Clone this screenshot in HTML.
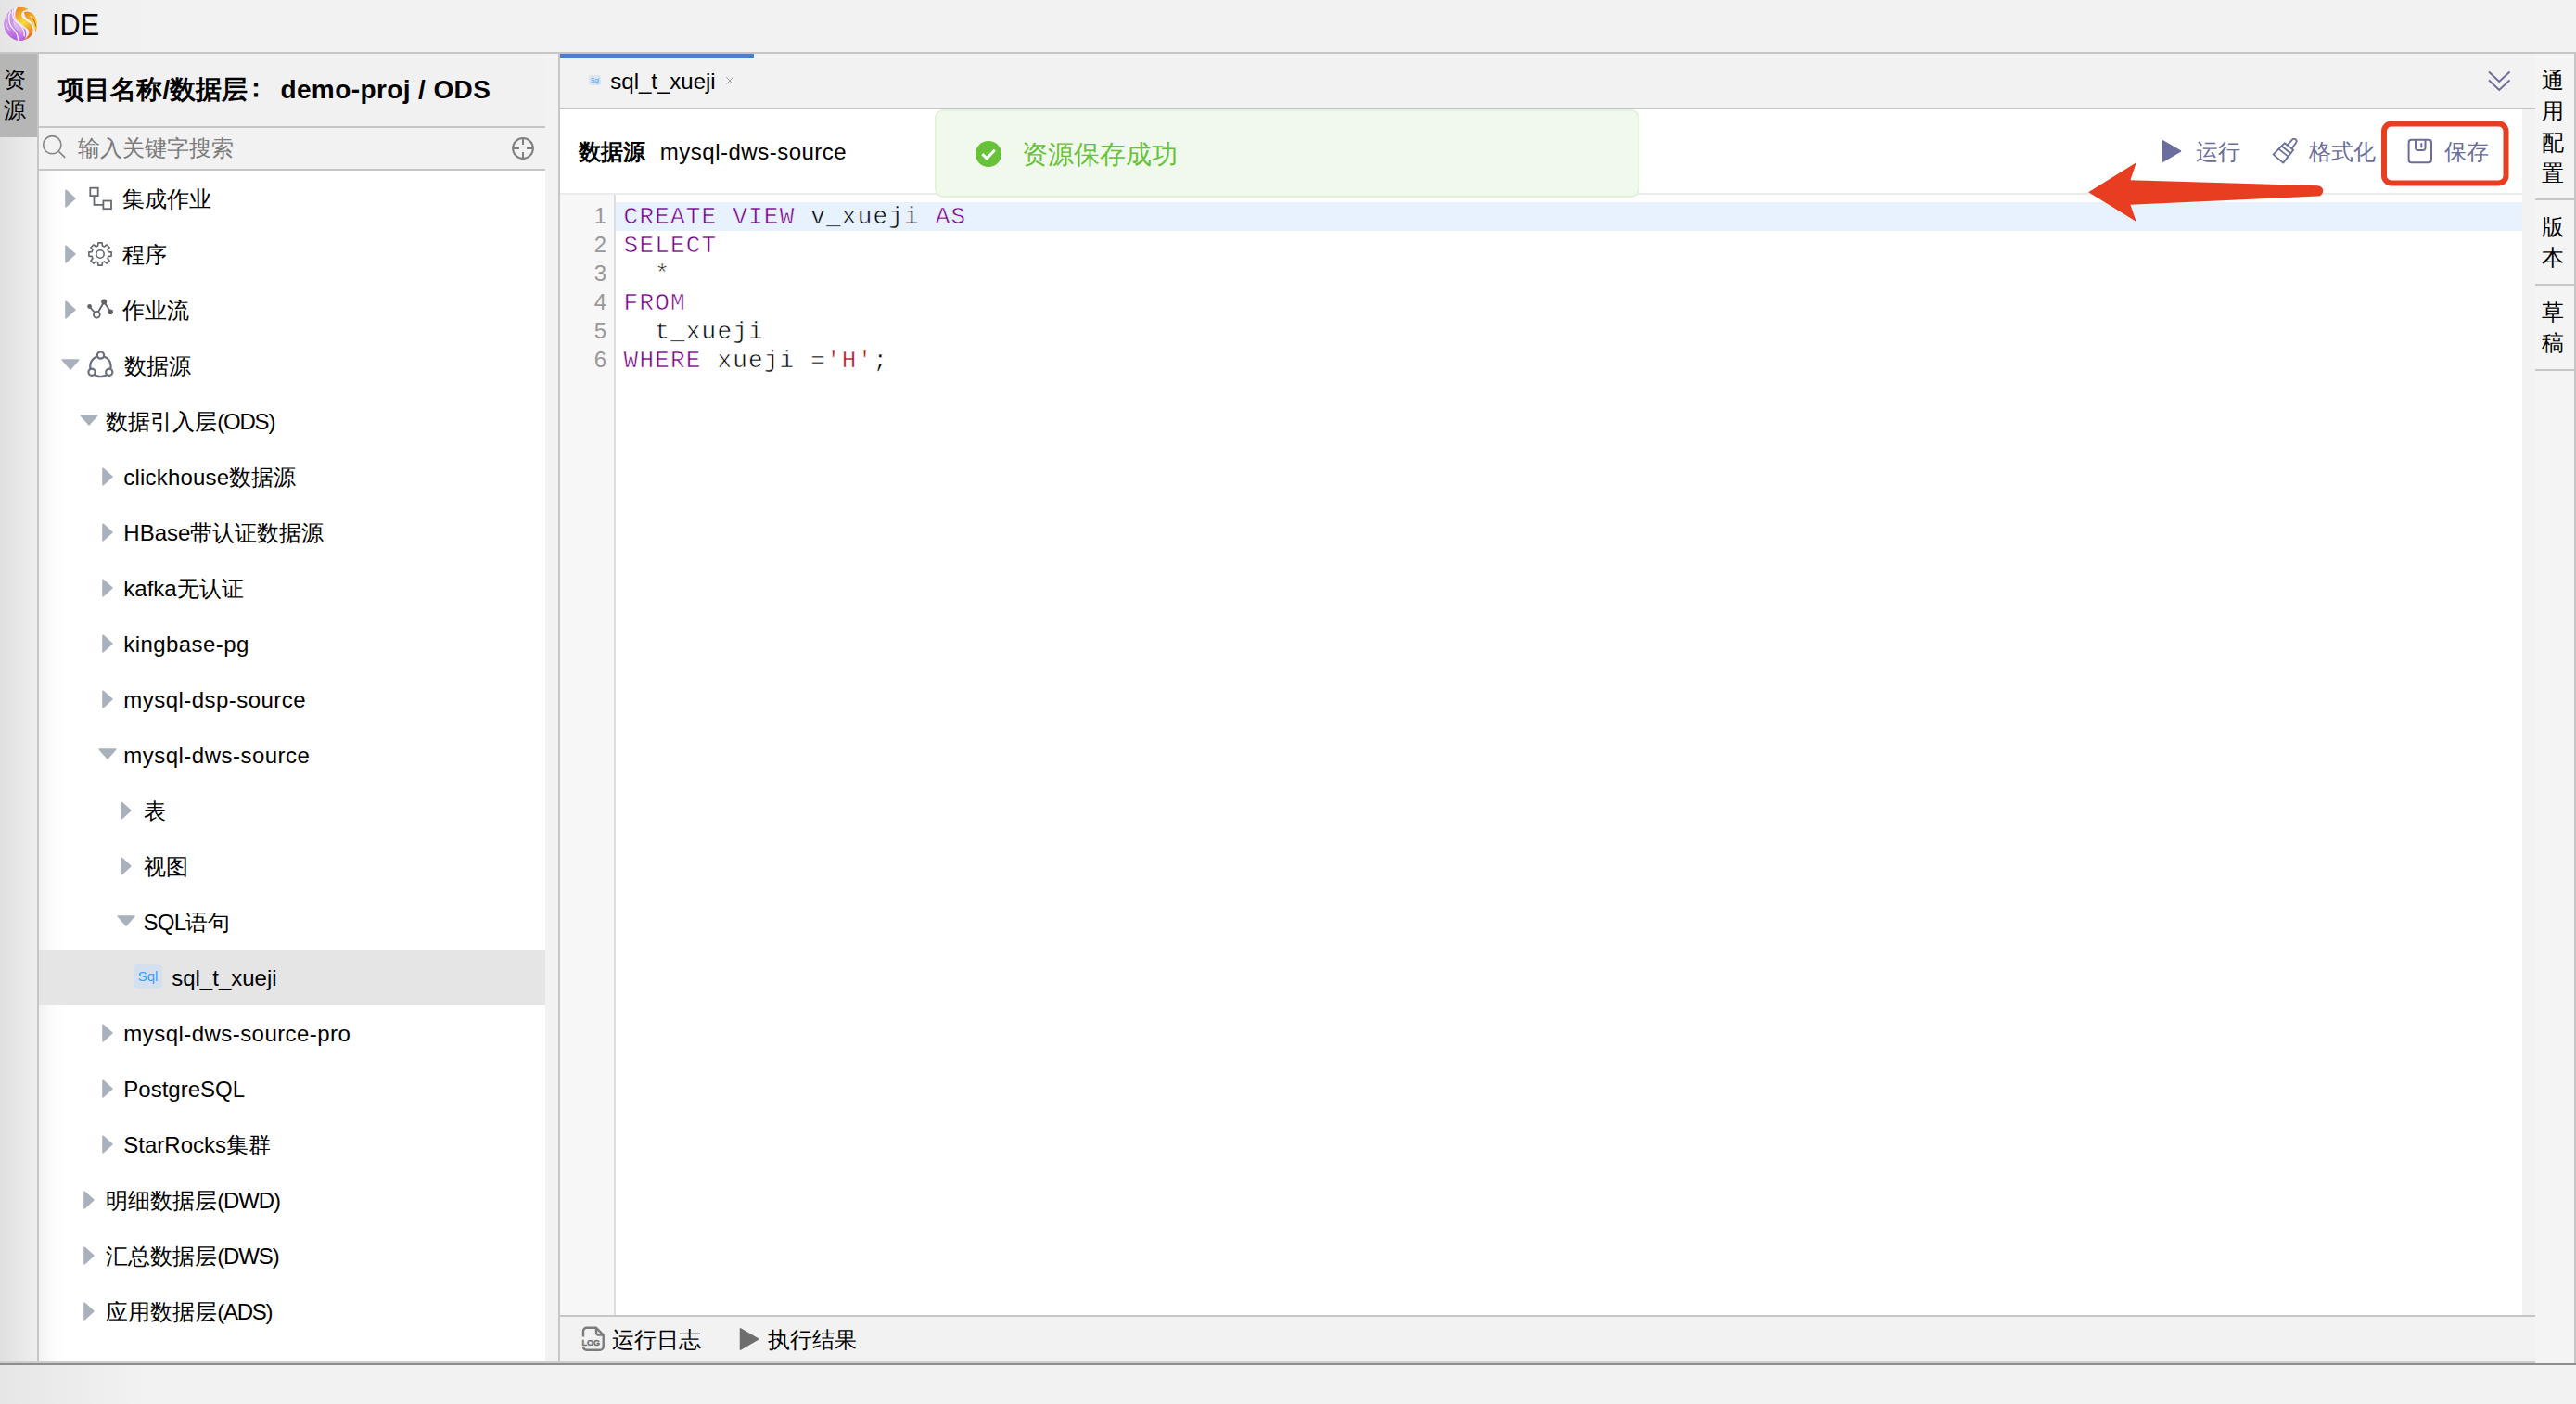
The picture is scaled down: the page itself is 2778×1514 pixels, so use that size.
<!DOCTYPE html>
<html lang="zh">
<head>
<meta charset="utf-8">
<title>IDE</title>
<style>
*{box-sizing:border-box;margin:0;padding:0}
html,body{width:2778px;height:1514px;overflow:hidden}
body{background:#f2f2f2;font-family:"Liberation Sans",sans-serif;color:#000;position:relative}
.abs{position:absolute}
#topbar{left:0;top:0;width:2778px;height:56px;background:linear-gradient(to right,#e4e4e4 0,#ececec 40px,#f1f1f1 110px,#f2f2f2 200px)}
#ide{left:55.500px;top:7.750px;font-size:33.500px;line-height:38px;transform:scaleX(0.915);transform-origin:0 0}
#hline{left:0;top:56px;width:2778px;height:2px;background:#c6c6c6}
#lstrip{left:0;top:58px;width:40px;height:1410px;background:linear-gradient(to right,#e0e0e0,#eeeeee)}
#restab{left:0;top:58px;width:40px;padding-right:8px;height:90px;background:#b6b6b6;font-size:24px;line-height:33px;text-align:center;padding-top:11px}
#lborder{left:40px;top:58px;width:2px;height:1410px;background:#c6c6c6}
#lpanel{left:42px;top:58px;width:546px;height:1410px;background:#f1f1f1}
#ptitle{left:21.400px;top:0;height:78px;line-height:78px;font-size:28px;font-weight:bold;white-space:nowrap}
#pt2{left:260.400px;top:0;height:78px;line-height:78px;font-size:28px;font-weight:bold;white-space:nowrap;letter-spacing:0.400px}
.hb{left:0;width:546px;height:2px;background:#c6c6c6}
#search{left:0;top:80px;width:546px;height:44px;background:#f2f2f2}
#ph{left:41.500px;top:-1px;height:44px;line-height:45px;font-size:24px;color:#7b7b7b;white-space:nowrap}
#tree{left:0;top:126px;width:546px;height:1284px;background:linear-gradient(to right,#f3f3f3 0,#fdfdfd 18px,#fff 30px)}
.row{position:absolute;left:0;width:546px;height:60px}
.row.sel{background:#e5e5e5}
.row .arr,.row .ticon{position:absolute}
.row .tx{position:absolute;top:0;height:60px;line-height:61px;font-size:24px;white-space:nowrap;color:#000}
.sqlic{position:absolute;width:31px;height:26px;border-radius:4px;background:#d5e0ef;color:#3b9cfb;font-size:15px;line-height:26px;text-align:center;letter-spacing:0}
#split{left:588px;top:58px;width:14px;height:1410px;background:#f2f2f2}
#vline{left:602px;top:58px;width:2px;height:1410px;background:#c6c6c6}
#tabbar{left:604px;top:58px;width:2130px;height:58px;background:#f2f2f2}
#tabind{left:0;top:0;width:209px;height:5px;background:#4c7fc4}
#tabtx{left:54.300px;top:3px;height:53px;line-height:53px;font-size:24px;white-space:nowrap}
#tabic{left:31px;top:23px;width:13px;height:11px;border-radius:2px;background:#dbe6f5;color:#3e9bf4;font-size:6.500px;line-height:11px;text-align:center;letter-spacing:-0.200px}
#tabline{left:604px;top:116px;width:2130px;height:2px;background:#c6c6c6}
#toolbar{left:604px;top:118px;width:2116px;height:90px;background:#fff}
#tbline{left:604px;top:208px;width:2116px;height:2px;background:#ebebeb}
#ds1{left:20px;top:0;height:90px;line-height:91px;font-size:24px;font-weight:bold;white-space:nowrap}
#ds2{left:107.800px;top:0;height:90px;line-height:91px;font-size:24px;letter-spacing:0.5px;white-space:nowrap}
.tb{position:absolute;top:0;height:90px;line-height:91px;font-size:24px;color:#6b6e9c;white-space:nowrap}
#editor{left:604px;top:210px;width:2116px;height:1208px;background:#fff;overflow:hidden}
#gutter{left:0;top:0;width:60px;height:1208px;background:#f7f7f7;border-right:2px solid #ddd}
.ln{position:absolute;right:8px;margin-top:-1px;height:31px;line-height:31px;font-size:24px;color:#999;text-align:right}
#active{left:60px;top:8px;width:2056px;height:31px;background:#e8f2ff}
.cl{position:absolute;left:68.600px;height:31px;line-height:31px;font-family:"Liberation Mono",monospace;font-size:26px;letter-spacing:1.200px;color:#000;white-space:pre;-webkit-text-stroke:0.550px #fff;margin-top:1.200px}
.cl.a{-webkit-text-stroke-color:#e8f2ff}
.k{color:#770088}.s{color:#aa1111}
#rstrip{left:2720px;top:118px;width:14px;height:1300px;background:#f2f2f2}
#botline{left:604px;top:1418px;width:2130px;height:2px;background:#c6c6c6}
#botbar{left:604px;top:1420px;width:2130px;height:48px;background:#f2f2f2}
.bt{position:absolute;top:0;height:48px;line-height:49px;font-size:24px;white-space:nowrap}
#bl1{left:0;top:1468px;width:2734px;height:2px;background:#cdcdcd}
#bl2{left:0;top:1470px;width:2778px;height:2px;background:#8e8e8e}
#rside{left:2734px;top:58px;width:42px;height:1412px;background:#f4f4f4}
#rborder{left:2776px;top:58px;width:2px;height:1412px;background:#c6c6c6}
.rs{position:absolute;left:-2px;width:42px;font-size:24px;line-height:33.400px;text-align:center;padding-top:12px}
.rl{position:absolute;left:0;width:42px;height:2px;background:#c6c6c6}
#toast{left:1008px;top:118px;width:760px;height:95px;border:2px solid #e1f3d8;border-radius:9px;background:#f0f9eb}
#toasttx{left:92px;top:0;height:91px;line-height:93px;font-size:28px;color:#67c23a;white-space:nowrap}
</style>
</head>
<body>
<div id="topbar" class="abs"></div>
<svg class="abs" style="left:3px;top:7px" width="38" height="38" viewBox="0 0 38 38">
<defs>
<clipPath id="lc"><circle cx="440" cy="512" r="362"/></clipPath>
<linearGradient id="lp" x1="0.3" y1="0" x2="0.5" y2="1"><stop offset="0" stop-color="#d3a3ea"/><stop offset="0.55" stop-color="#c98fe6"/><stop offset="1" stop-color="#b055d8"/></linearGradient>
<linearGradient id="lp2" x1="0" y1="0" x2="0.4" y2="1"><stop offset="0" stop-color="#e6d2f3"/><stop offset="0.6" stop-color="#d3a6ec"/><stop offset="1" stop-color="#bb68de"/></linearGradient>
<linearGradient id="lo" x1="0.2" y1="0" x2="0.6" y2="1"><stop offset="0" stop-color="#ea8522"/><stop offset="0.22" stop-color="#f2ab28"/><stop offset="0.5" stop-color="#f9de3c"/><stop offset="0.75" stop-color="#f0a226"/><stop offset="1" stop-color="#df681c"/></linearGradient>
<linearGradient id="lo2" x1="0" y1="0" x2="0.5" y2="1"><stop offset="0" stop-color="#ea8622"/><stop offset="0.5" stop-color="#f4b82c"/><stop offset="0.85" stop-color="#f9e442"/><stop offset="1" stop-color="#f2a828"/></linearGradient>
</defs>
<g transform="translate(-3,-7) scale(0.050467)" clip-path="url(#lc)">
<circle cx="440" cy="512" r="362" fill="#f1ecf5"/>
<path d="M300 160C200 200 100 330 80 500C75 650 180 800 330 865C400 885 470 875 520 855C565 780 575 700 545 640C500 570 400 520 340 440C290 370 280 260 300 160Z" fill="url(#lp)"/>
<path d="M290 430C330 520 440 560 505 640C550 700 530 800 480 870L390 880C440 800 440 720 375 655C310 595 270 540 290 430Z" fill="url(#lp2)"/>
<path d="M225 235C165 370 185 520 275 610C340 672 395 740 385 870" fill="none" stroke="#f1ecf5" stroke-width="26"/>
<path d="M150 330C110 450 130 560 200 650" fill="none" stroke="#efe4f6" stroke-width="18"/>
<path d="M275 205C250 330 290 430 380 500C470 565 545 640 520 780" fill="none" stroke="#f1ecf5" stroke-width="30"/>
<path d="M380 156C450 146 545 162 612 200C540 215 470 250 460 300C455 350 480 380 520 410C570 445 610 470 640 500C690 550 715 620 700 690C690 750 640 820 500 868C570 810 625 740 620 690C612 640 590 620 560 600C520 570 470 530 440 500C400 460 350 430 340 400C315 340 310 260 380 156Z" fill="url(#lo)"/>
<path d="M515 262C570 232 660 252 715 305C775 370 800 460 797 550C794 630 775 700 745 740C765 680 755 640 730 600C720 560 715 530 700 500C670 450 620 430 580 400C545 370 520 320 515 262Z" fill="url(#lo2)"/>
<path d="M640 340C700 385 735 440 748 520" fill="none" stroke="#f4ece4" stroke-width="20" opacity="0.9"/>
<path d="M685 385C735 430 758 490 764 570" fill="none" stroke="#df621c" stroke-width="24"/>
</g>
</svg>
<div id="ide" class="abs">IDE</div>
<div id="hline" class="abs"></div>

<div id="lstrip" class="abs"></div>
<div id="restab" class="abs">资<br>源</div>
<div id="lborder" class="abs"></div>

<div id="lpanel" class="abs">
  <div id="ptitle" class="abs">项目名称/数据层<span style="position:relative;left:-5.600px;top:-2.500px">：</span></div>
  <div id="pt2" class="abs">demo-proj / ODS</div>
  <div class="hb abs" style="top:78px"></div>
  <div id="search" class="abs">
    <svg class="abs" style="left:2px;top:6px" width="32" height="34" viewBox="0 0 32 34" fill="none" stroke="#858585" stroke-width="1.6"><circle cx="12.3" cy="12.2" r="9.6"/><path d="M19.2 19.2L26.2 25.8"/></svg>
    <div id="ph" class="abs">输入关键字搜索</div>
    <svg class="abs" style="left:508px;top:7.500px" width="28" height="28" viewBox="-14 -14 28 28" fill="none" stroke="#808080" stroke-width="2"><circle r="10.900"/><path d="M0 -10.900V-4M0 10.900V4M-10.900 0H-4M10.900 0H4"/></svg>
  </div>
  <div class="hb abs" style="top:124px"></div>
  <div id="tree" class="abs">
<div class="row" style="top:0px"><svg class="arr" style="left:28px;top:20px" width="12" height="20" viewBox="0 0 12 20"><path d="M1 1.2L11 10L1 18.8Z" fill="#a9b1bc" stroke="#a9b1bc" stroke-width="1.6" stroke-linejoin="round"/></svg><svg class="ticon" style="left:53px;top:16px" width="28" height="28" viewBox="0 0 28 28" fill="none" stroke="#666a70" stroke-width="1.8"><rect x="2.3" y="2.7" width="8.4" height="8.4"/><rect x="16.4" y="16.5" width="8.6" height="8.7"/><path d="M6.5 11.1V20.8H16.4"/></svg><span class="tx" style="left:90.0px">集成作业</span></div>
<div class="row" style="top:60px"><svg class="arr" style="left:28px;top:20px" width="12" height="20" viewBox="0 0 12 20"><path d="M1 1.2L11 10L1 18.8Z" fill="#a9b1bc" stroke="#a9b1bc" stroke-width="1.6" stroke-linejoin="round"/></svg><svg class="ticon" style="left:52px;top:16px" width="28" height="28" viewBox="-14 -14 28 28" fill="none" stroke="#63676d" stroke-width="1.6" stroke-linejoin="round"><circle r="4.2"/><path d="M8.99 -2.39 L12.12 -2.08 L12.12 2.08 L8.99 2.39 L8.05 4.66 L10.04 7.10 L7.10 10.04 L4.66 8.05 L2.39 8.99 L2.08 12.12 L-2.08 12.12 L-2.39 8.99 L-4.66 8.05 L-7.10 10.04 L-10.04 7.10 L-8.05 4.66 L-8.99 2.39 L-12.12 2.08 L-12.12 -2.08 L-8.99 -2.39 L-8.05 -4.66 L-10.04 -7.10 L-7.10 -10.04 L-4.66 -8.05 L-2.39 -8.99 L-2.08 -12.12 L2.08 -12.12 L2.39 -8.99 L4.66 -8.05 L7.10 -10.04 L10.04 -7.10 L8.05 -4.66Z"/></svg><span class="tx" style="left:90.0px">程序</span></div>
<div class="row" style="top:120px"><svg class="arr" style="left:28px;top:20px" width="12" height="20" viewBox="0 0 12 20"><path d="M1 1.2L11 10L1 18.8Z" fill="#a9b1bc" stroke="#a9b1bc" stroke-width="1.6" stroke-linejoin="round"/></svg><svg class="ticon" style="left:52px;top:12px" width="30" height="28" viewBox="0 0 30 28" fill="none" stroke="#5f6368" stroke-width="1.8"><path d="M2.3 14.5L10.3 23.3L18.2 9.5L25.2 20.2"/><circle cx="2.6" cy="14.5" r="2.4" fill="#5f6368" stroke="none"/><circle cx="18.2" cy="9.5" r="3" fill="#5f6368" stroke="none"/><circle cx="25.2" cy="20.2" r="2.8" fill="#5f6368" stroke="none"/><circle cx="10.3" cy="23.3" r="3.4" fill="#fff"/></svg><span class="tx" style="left:90.0px">作业流</span></div>
<div class="row" style="top:180px"><svg class="arr" style="left:24px;top:23px" width="20" height="12" viewBox="0 0 20 12"><path d="M1.2 1L18.8 1L10 11Z" fill="#a9b1bc" stroke="#a9b1bc" stroke-width="1.6" stroke-linejoin="round"/></svg><svg class="ticon" style="left:52px;top:14px" width="30" height="30" viewBox="0 0 30 30" fill="none" stroke="#6b6f7b" stroke-width="2.2"><circle cx="14.4" cy="17" r="11.2"/><circle cx="14.5" cy="5.1" r="3.6" fill="#fff"/><circle cx="5" cy="23.25" r="3.6" fill="#fff"/><circle cx="23.75" cy="23.25" r="3.6" fill="#fff"/></svg><span class="tx" style="left:92.0px">数据源</span></div>
<div class="row" style="top:240px"><svg class="arr" style="left:44px;top:23px" width="20" height="12" viewBox="0 0 20 12"><path d="M1.2 1L18.8 1L10 11Z" fill="#a9b1bc" stroke="#a9b1bc" stroke-width="1.6" stroke-linejoin="round"/></svg><span class="tx" style="left:72.2px">数据引入层<span style="letter-spacing:-1.2px">(ODS)</span></span></div>
<div class="row" style="top:300px"><svg class="arr" style="left:68px;top:20px" width="12" height="20" viewBox="0 0 12 20"><path d="M1 1.2L11 10L1 18.8Z" fill="#a9b1bc" stroke="#a9b1bc" stroke-width="1.6" stroke-linejoin="round"/></svg><span class="tx" style="left:91.3px"><span style="letter-spacing:0.2px">clickhouse</span>数据源</span></div>
<div class="row" style="top:360px"><svg class="arr" style="left:68px;top:20px" width="12" height="20" viewBox="0 0 12 20"><path d="M1 1.2L11 10L1 18.8Z" fill="#a9b1bc" stroke="#a9b1bc" stroke-width="1.6" stroke-linejoin="round"/></svg><span class="tx" style="left:91.3px">HBase带认证数据源</span></div>
<div class="row" style="top:420px"><svg class="arr" style="left:68px;top:20px" width="12" height="20" viewBox="0 0 12 20"><path d="M1 1.2L11 10L1 18.8Z" fill="#a9b1bc" stroke="#a9b1bc" stroke-width="1.6" stroke-linejoin="round"/></svg><span class="tx" style="left:91.3px">kafka无认证</span></div>
<div class="row" style="top:480px"><svg class="arr" style="left:68px;top:20px" width="12" height="20" viewBox="0 0 12 20"><path d="M1 1.2L11 10L1 18.8Z" fill="#a9b1bc" stroke="#a9b1bc" stroke-width="1.6" stroke-linejoin="round"/></svg><span class="tx" style="left:91.3px"><span style="letter-spacing:0.42px">kingbase-pg</span></span></div>
<div class="row" style="top:540px"><svg class="arr" style="left:68px;top:20px" width="12" height="20" viewBox="0 0 12 20"><path d="M1 1.2L11 10L1 18.8Z" fill="#a9b1bc" stroke="#a9b1bc" stroke-width="1.6" stroke-linejoin="round"/></svg><span class="tx" style="left:91.3px"><span style="letter-spacing:0.46px">mysql-dsp-source</span></span></div>
<div class="row" style="top:600px"><svg class="arr" style="left:64px;top:23px" width="20" height="12" viewBox="0 0 20 12"><path d="M1.2 1L18.8 1L10 11Z" fill="#a9b1bc" stroke="#a9b1bc" stroke-width="1.6" stroke-linejoin="round"/></svg><span class="tx" style="left:91.3px"><span style="letter-spacing:0.48px">mysql-dws-source</span></span></div>
<div class="row" style="top:660px"><svg class="arr" style="left:88px;top:20px" width="12" height="20" viewBox="0 0 12 20"><path d="M1 1.2L11 10L1 18.8Z" fill="#a9b1bc" stroke="#a9b1bc" stroke-width="1.6" stroke-linejoin="round"/></svg><span class="tx" style="left:112.5px">表</span></div>
<div class="row" style="top:720px"><svg class="arr" style="left:88px;top:20px" width="12" height="20" viewBox="0 0 12 20"><path d="M1 1.2L11 10L1 18.8Z" fill="#a9b1bc" stroke="#a9b1bc" stroke-width="1.6" stroke-linejoin="round"/></svg><span class="tx" style="left:112.5px">视图</span></div>
<div class="row" style="top:780px"><svg class="arr" style="left:84px;top:23px" width="20" height="12" viewBox="0 0 20 12"><path d="M1.2 1L18.8 1L10 11Z" fill="#a9b1bc" stroke="#a9b1bc" stroke-width="1.6" stroke-linejoin="round"/></svg><span class="tx" style="left:112.5px"><span style="letter-spacing:-0.7px">SQL</span>语句</span></div>
<div class="row sel" style="top:840px"><span class="sqlic" style="left:102px;top:16px">Sql</span><span class="tx" style="left:143.2px">sql_t_xueji</span></div>
<div class="row" style="top:900px"><svg class="arr" style="left:68px;top:20px" width="12" height="20" viewBox="0 0 12 20"><path d="M1 1.2L11 10L1 18.8Z" fill="#a9b1bc" stroke="#a9b1bc" stroke-width="1.6" stroke-linejoin="round"/></svg><span class="tx" style="left:91.3px"><span style="letter-spacing:0.45px">mysql-dws-source-pro</span></span></div>
<div class="row" style="top:960px"><svg class="arr" style="left:68px;top:20px" width="12" height="20" viewBox="0 0 12 20"><path d="M1 1.2L11 10L1 18.8Z" fill="#a9b1bc" stroke="#a9b1bc" stroke-width="1.6" stroke-linejoin="round"/></svg><span class="tx" style="left:91.3px">PostgreSQL</span></div>
<div class="row" style="top:1020px"><svg class="arr" style="left:68px;top:20px" width="12" height="20" viewBox="0 0 12 20"><path d="M1 1.2L11 10L1 18.8Z" fill="#a9b1bc" stroke="#a9b1bc" stroke-width="1.6" stroke-linejoin="round"/></svg><span class="tx" style="left:91.3px">StarRocks集群</span></div>
<div class="row" style="top:1080px"><svg class="arr" style="left:48px;top:20px" width="12" height="20" viewBox="0 0 12 20"><path d="M1 1.2L11 10L1 18.8Z" fill="#a9b1bc" stroke="#a9b1bc" stroke-width="1.6" stroke-linejoin="round"/></svg><span class="tx" style="left:72.2px">明细数据层<span style="letter-spacing:-1.1px">(DWD)</span></span></div>
<div class="row" style="top:1140px"><svg class="arr" style="left:48px;top:20px" width="12" height="20" viewBox="0 0 12 20"><path d="M1 1.2L11 10L1 18.8Z" fill="#a9b1bc" stroke="#a9b1bc" stroke-width="1.6" stroke-linejoin="round"/></svg><span class="tx" style="left:72.2px">汇总数据层<span style="letter-spacing:-1.1px">(DWS)</span></span></div>
<div class="row" style="top:1200px"><svg class="arr" style="left:48px;top:20px" width="12" height="20" viewBox="0 0 12 20"><path d="M1 1.2L11 10L1 18.8Z" fill="#a9b1bc" stroke="#a9b1bc" stroke-width="1.6" stroke-linejoin="round"/></svg><span class="tx" style="left:72.2px">应用数据层<span style="letter-spacing:-1.25px">(ADS)</span></span></div>
  </div>
</div>
<div id="split" class="abs"></div>
<div id="vline" class="abs"></div>

<div id="tabbar" class="abs">
  <div id="tabind" class="abs"></div>
  <div id="tabic" class="abs">Sql</div>
  <div id="tabtx" class="abs">sql_t_xueji</div>
  <svg class="abs" style="left:178px;top:24px" width="10" height="10" viewBox="0 0 10 10" stroke="#a2a2a2" stroke-width="1"><path d="M1.200 1.200L8.800 8.800M8.800 1.200L1.200 8.800"/></svg>
  <svg class="abs" style="left:2078px;top:17px" width="26" height="26" viewBox="0 0 26 26" fill="none" stroke="#6b6e9c" stroke-width="2"><path d="M2 2.5L13.2 13L24.5 2.5M2 11.5L13.2 22L24.5 11.5"/></svg>
</div>
<div id="tabline" class="abs"></div>

<div id="toolbar" class="abs">
  <div id="ds1" class="abs">数据源</div>
  <div id="ds2" class="abs">mysql-dws-source</div>
  <svg class="abs" style="left:1727px;top:32px" width="22" height="26" viewBox="0 0 22 26"><path d="M1.5 1.8L20.5 13L1.5 24.2Z" fill="#6b6e9c" stroke="#6b6e9c" stroke-width="1.5" stroke-linejoin="round"/></svg>
  <div class="tb" style="left:1764px">运行</div>
  <svg class="abs" style="left:1846px;top:31px" width="28" height="28" viewBox="0 0 28 28" fill="none" stroke="#6b6e9c" stroke-width="1.8" stroke-linejoin="round" stroke-linecap="round"><path d="M16.6 7.6L21.8 1.8A2.6 2.6 0 0 1 26 5L21.4 11.4"/><path d="M13.8 5.2L23.2 12.6L12.2 26.6L1.6 17.6Z"/><path d="M10.5 8.5L20.3 16.2M7.4 11.6L17.4 19.6"/></svg>
  <div class="tb" style="left:1886px">格式化</div>
  <svg class="abs" style="left:1992px;top:31px" width="28" height="28" viewBox="0 0 28 28" fill="none" stroke="#6b6e9c" stroke-width="2" stroke-linejoin="round" stroke-linecap="round"><rect x="1.6" y="1.8" width="24.4" height="24.4" rx="3"/><path d="M9 2V10.5A2.5 2.5 0 0 0 11.5 13H17A2.5 2.5 0 0 0 19.5 10.5V2"/><path d="M15.3 6V9.6"/></svg>
  <div class="tb" style="left:2032px">保存</div>
</div>
<div id="tbline" class="abs"></div>

<div id="editor" class="abs">
  <div id="gutter" class="abs"><div class="ln" style="top:8px">1</div><div class="ln" style="top:39px">2</div><div class="ln" style="top:70px">3</div><div class="ln" style="top:101px">4</div><div class="ln" style="top:132px">5</div><div class="ln" style="top:163px">6</div></div>
  <div id="active" class="abs"></div>
  <pre class="cl a" style="top:8px"><span class="k">CREATE</span> <span class="k">VIEW</span> v_xueji <span class="k">AS</span></pre><pre class="cl" style="top:39px"><span class="k">SELECT</span></pre><pre class="cl" style="top:70px">  *</pre><pre class="cl" style="top:101px"><span class="k">FROM</span></pre><pre class="cl" style="top:132px">  t_xueji</pre><pre class="cl" style="top:163px"><span class="k">WHERE</span> xueji =<span class="s">'H'</span>;</pre>
</div>
<div id="rstrip" class="abs"></div>
<div id="botline" class="abs"></div>
<div id="botbar" class="abs">
  <svg class="abs" style="left:22px;top:10px" width="28" height="29" viewBox="0 0 28 29" fill="none" stroke="#7b7b7b" stroke-width="2.400" stroke-linejoin="round"><path d="M3 11.600V5.600A3.800 3.800 0 0 1 6.800 1.800H17L24.700 9.600V21.900A3.800 3.800 0 0 1 20.900 25.700H6.800A3.800 3.800 0 0 1 3 22.400"/><path d="M17 1.800V6.800A2.800 2.800 0 0 0 19.800 9.600H24.700"/><text x="1.400" y="21" style="font:bold 9.600px 'Liberation Sans',sans-serif" fill="#757575" stroke="#757575" stroke-width="0.450" textLength="19.800" lengthAdjust="spacingAndGlyphs">LOG</text></svg>
  <div class="bt" style="left:56px">运行日志</div>
  <svg class="abs" style="left:193px;top:11px" width="22" height="26" viewBox="0 0 22 26"><path d="M1.5 1.8L20.5 13L1.5 24.2Z" fill="#6e6e6e" stroke="#6e6e6e" stroke-width="1.5" stroke-linejoin="round"/></svg>
  <div class="bt" style="left:224px">执行结果</div>
</div>
<div class="abs" style="left:0;top:1472px;width:160px;height:42px;background:linear-gradient(to right,#e6e6e6,#f2f2f2)"></div>
<div id="bl1" class="abs"></div>
<div id="bl2" class="abs"></div>

<div id="rside" class="abs">
  <div class="rs" style="top:0">通<br>用<br>配<br>置</div>
  <div class="rl" style="top:156px"></div>
  <div class="rs" style="top:158px">版<br>本</div>
  <div class="rl" style="top:248px"></div>
  <div class="rs" style="top:250px">草<br>稿</div>
  <div class="rl" style="top:340px"></div>
</div>
<div id="rborder" class="abs"></div>

<div id="toast" class="abs">
  <svg class="abs" style="left:42px;top:32px" width="28" height="28" viewBox="0 0 28 28"><circle cx="14" cy="14" r="14" fill="#67c23a"/><path d="M7.400 14.200L12.200 18.800L20.800 9.800" fill="none" stroke="#fff" stroke-width="3"/></svg>
  <div id="toasttx" class="abs">资源保存成功</div>
</div>

<svg class="abs" style="left:2240px;top:120px" width="480" height="130" viewBox="2240 120 480 130">
  <rect x="2571" y="133.500" width="131.500" height="64" rx="8" fill="none" stroke="#e93d22" stroke-width="6"/>
  <path d="M2252.200 207.200L2303.800 175.300L2297.400 194.200L2499.500 200.200A5.700 5.700 0 0 1 2499.500 211.600L2297.400 220.800L2303.800 238.900Z" fill="#e93d22"/>
</svg>
</body>
</html>
